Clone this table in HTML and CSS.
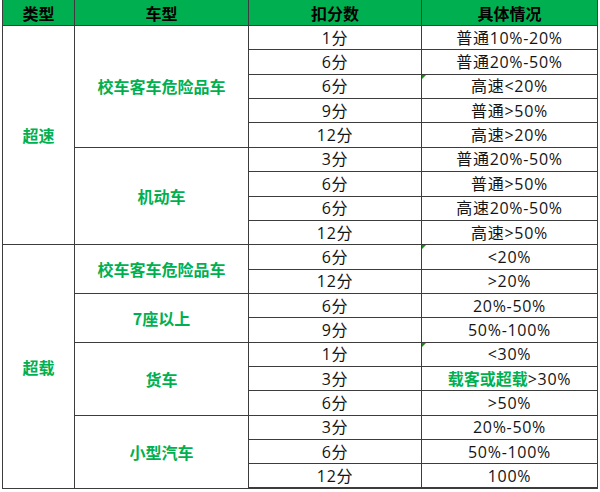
FILE: index.html
```html
<!DOCTYPE html>
<html lang="zh-CN">
<head>
<meta charset="utf-8">
<link rel="stylesheet" href="styles.css">
</head>
<body>
<table class="sheet">
  <colgroup>
    <col class="c1"><col class="c2"><col class="c3"><col class="c4">
  </colgroup>
  <thead>
    <tr class="head">
      <th>类型</th><th>车型</th><th>扣分数</th><th>具体情况</th>
    </tr>
  </thead>
  <tbody>
    <tr><td class="cat" rowspan="9">超速</td><td class="veh" rowspan="5">校车客车危险品车</td><td>1分</td><td>普通10%-20%</td></tr>
    <tr><td>6分</td><td>普通20%-50%</td></tr>
    <tr><td>6分</td><td class="mark">高速&lt;20%</td></tr>
    <tr><td>9分</td><td>普通&gt;50%</td></tr>
    <tr><td>12分</td><td>高速&gt;20%</td></tr>
    <tr><td class="veh" rowspan="4">机动车</td><td>3分</td><td>普通20%-50%</td></tr>
    <tr><td>6分</td><td>普通&gt;50%</td></tr>
    <tr><td>6分</td><td>高速20%-50%</td></tr>
    <tr><td>12分</td><td>高速&gt;50%</td></tr>
    <tr><td class="cat" rowspan="10">超载</td><td class="veh" rowspan="2">校车客车危险品车</td><td>6分</td><td class="mark">&lt;20%</td></tr>
    <tr><td>12分</td><td>&gt;20%</td></tr>
    <tr><td class="veh" rowspan="2">7座以上</td><td>6分</td><td>20%-50%</td></tr>
    <tr><td>9分</td><td>50%-100%</td></tr>
    <tr><td class="veh" rowspan="3">货车</td><td>1分</td><td class="mark">&lt;30%</td></tr>
    <tr><td>3分</td><td><span class="hl">载客或超载</span>&gt;30%</td></tr>
    <tr><td>6分</td><td>&gt;50%</td></tr>
    <tr><td class="veh" rowspan="3">小型汽车</td><td>3分</td><td>20%-50%</td></tr>
    <tr><td>6分</td><td>50%-100%</td></tr>
    <tr><td>12分</td><td>100%</td></tr>
  </tbody>
</table>
</body>
</html>
```

FILE: styles.css
```css
html, body {
  margin: 0;
  padding: 0;
  background: #ffffff;
}

body {
  width: 600px;
  height: 492px;
  overflow: hidden;
  font-family: "Noto Sans CJK SC", sans-serif;
  font-size: 16px;
  color: #000000;
}

.sheet {
  margin-left: 2px;
  border-collapse: collapse;
  table-layout: fixed;
  width: 595px;
}

.c1 { width: 72px; }
.c2 { width: 174px; }
.c3 { width: 173px; }
.c4 { width: 176px; }

.sheet th,
.sheet td {
  border: 1px solid #3c3c3c;
  padding: 0;
  text-align: center;
  vertical-align: middle;
  line-height: 20px;
  white-space: nowrap;
}

.sheet tbody td {
  font-family: "Open Sans", "Noto Sans CJK SC", sans-serif;
  color: #141414;
  letter-spacing: 0.7px;
}

.head th {
  background: #00b050;
  height: 25px;
  font-weight: bold;
  color: #000000;
  border-top: none;
}

.sheet tbody tr {
  height: 24.37px;
}

.sheet tbody tr:last-child td {
  border-bottom-width: 2px;
}

.sheet tbody td.cat,
.sheet tbody td.veh {
  font-family: "Noto Sans CJK SC", sans-serif;
  color: #00b050;
  font-weight: bold;
  letter-spacing: 0;
}

.hl {
  font-family: "Noto Sans CJK SC", sans-serif;
  color: #00b050;
  font-weight: bold;
  letter-spacing: 0;
}

.mark {
  position: relative;
}

.mark::before {
  content: "";
  position: absolute;
  left: 0;
  top: 0;
  width: 0;
  height: 0;
  border-top: 4px solid #1a8a1a;
  border-right: 4px solid transparent;
}
```
